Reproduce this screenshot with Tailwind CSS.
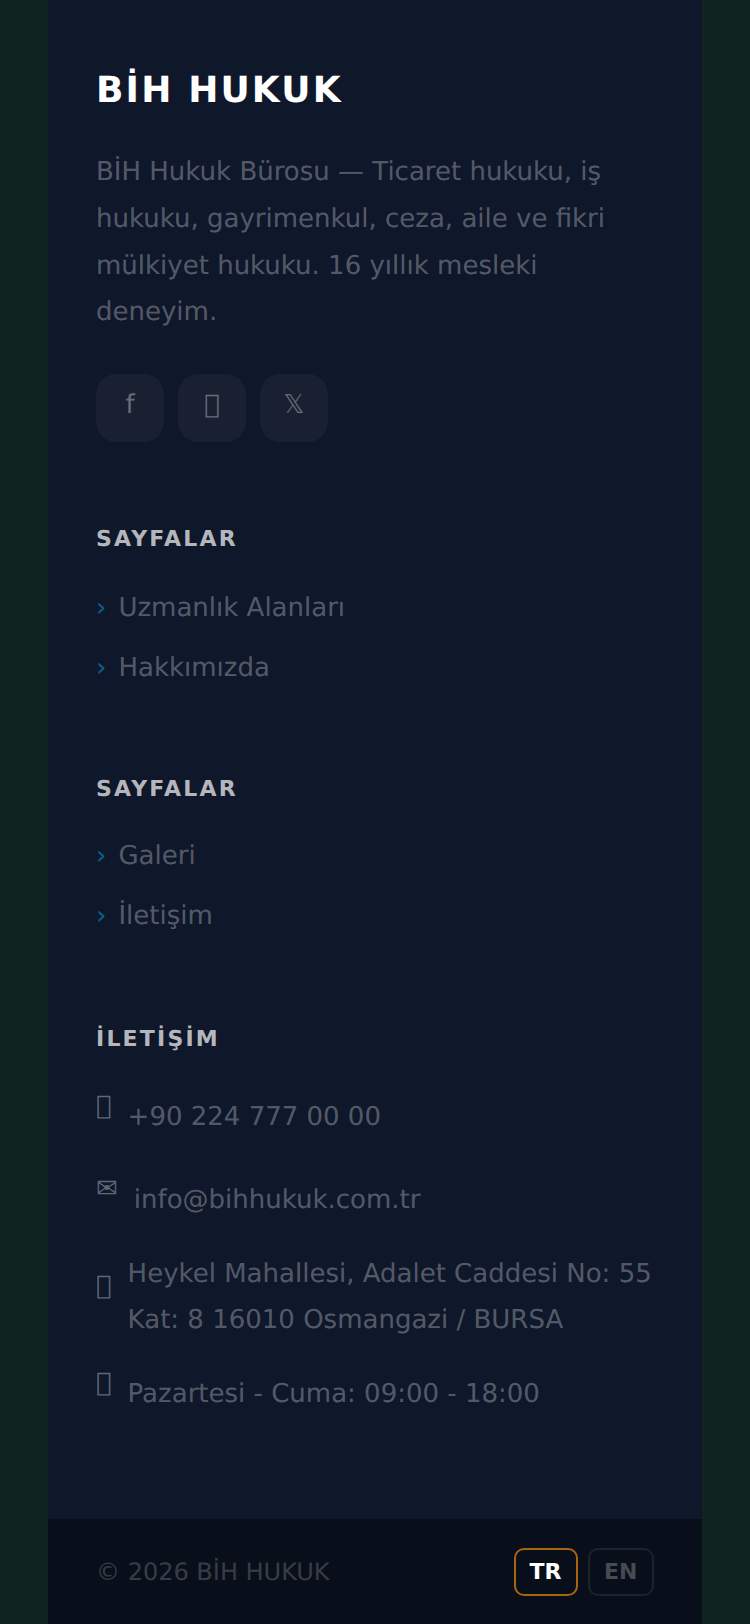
<!DOCTYPE html>
<html lang="tr">
<head>
    <meta charset="UTF-8">
    <meta name="viewport" content="width=device-width, initial-scale=1.0">
    <script src="https://cdn.jsdelivr.net/npm/@tailwindcss/browser@4"></script>
    <title>BİH Hukuk</title>
</head>
<body class="bg-[#0f241f] font-['DejaVu_Sans',sans-serif] antialiased [text-rendering:geometricPrecision]">
    <footer class="mx-auto flex h-[1624px] w-[654px] flex-col overflow-hidden bg-[#0f172a]">
        <div class="flex-1 px-12 pt-[65px]">
            <h2 class="text-[36px] leading-[52px] font-bold tracking-[2.16px] text-white">BİH HUKUK</h2>
            <p class="mt-[32px] text-[26px] leading-[46.8px] text-white/30">BİH Hukuk Bürosu — Ticaret hukuku, iş hukuku, gayrimenkul, ceza, aile ve fikri mülkiyet hukuku. 16 yıllık mesleki deneyim.</p>

            <div class="mt-[38px] flex gap-[14px]">
                <a class="flex h-[68px] w-[68px] items-center justify-center rounded-[20px] bg-white/[0.04] pb-[5px] text-[26px] text-white/35">f</a>
                <a class="flex h-[68px] w-[68px] items-center justify-center rounded-[20px] bg-white/[0.04] pb-[5px] text-[26px] text-white/35">&#xE0F0;</a>
                <a class="flex h-[68px] w-[68px] items-center justify-center rounded-[20px] bg-white/[0.04] pb-[5px] text-[26px] text-white/35">𝕏</a>
            </div>

            <h3 class="mt-[82px] text-[22px] leading-[32px] font-bold tracking-[2.2px] text-white/70">SAYFALAR</h3>
            <ul class="mt-[32px] flex flex-col gap-[20px] text-[26px] leading-[40px] text-white/30">
                <li class="flex gap-[12px]"><span class="text-[#0c5f8c]">›</span>Uzmanlık Alanları</li>
                <li class="flex gap-[12px]"><span class="text-[#0c5f8c]">›</span>Hakkımızda</li>
            </ul>

            <h3 class="mt-[86px] text-[22px] leading-[32px] font-bold tracking-[2.2px] text-white/70">SAYFALAR</h3>
            <ul class="mt-[30px] flex flex-col gap-[20px] text-[26px] leading-[40px] text-white/30">
                <li class="flex gap-[12px]"><span class="text-[#0c5f8c]">›</span>Galeri</li>
                <li class="flex gap-[12px]"><span class="text-[#0c5f8c]">›</span>İletişim</li>
            </ul>

            <h3 class="mt-[88px] text-[22px] leading-[32px] font-bold tracking-[2.2px] text-white/70">İLETİŞİM</h3>
            <ul class="mt-[30px] flex flex-col gap-[19.5px] text-[26px] leading-[45.5px] text-white/30">
                <li class="flex items-center gap-[16px]"><span class="-translate-y-[2px] pb-[18px] text-white/35">&#xE0F0;</span>+90 224 777 00 00</li>
                <li class="flex items-center gap-[16px]"><span class="-translate-y-[2px] pb-[18px] text-white/35">✉</span>info@bihhukuk.com.tr</li>
                <li class="flex items-center gap-[16px]"><span class="-translate-y-[2px] pb-[18px] text-white/35">&#xE0F0;</span><span>Heykel Mahallesi, Adalet Caddesi No: 55 Kat: 8 16010 Osmangazi / BURSA</span></li>
                <li class="flex items-center gap-[16px]"><span class="-translate-y-[2px] pb-[18px] text-white/35">&#xE0F0;</span>Pazartesi - Cuma: 09:00 - 18:00</li>
            </ul>
        </div>

        <div class="flex h-[105px] items-center justify-between bg-[#090f1a] px-12">
            <p class="text-[24px] text-white/20">© 2026 BİH HUKUK</p>
            <div class="flex gap-[10px]">
                <button class="h-[48px] rounded-[10px] border-2 border-[#a8650f] px-[14px] text-[22px] font-bold text-white">TR</button>
                <button class="h-[48px] rounded-[10px] border-2 border-white/[0.08] px-[14.5px] text-[22px] font-bold text-white/25">EN</button>
            </div>
        </div>
    </footer>
</body>
</html>
